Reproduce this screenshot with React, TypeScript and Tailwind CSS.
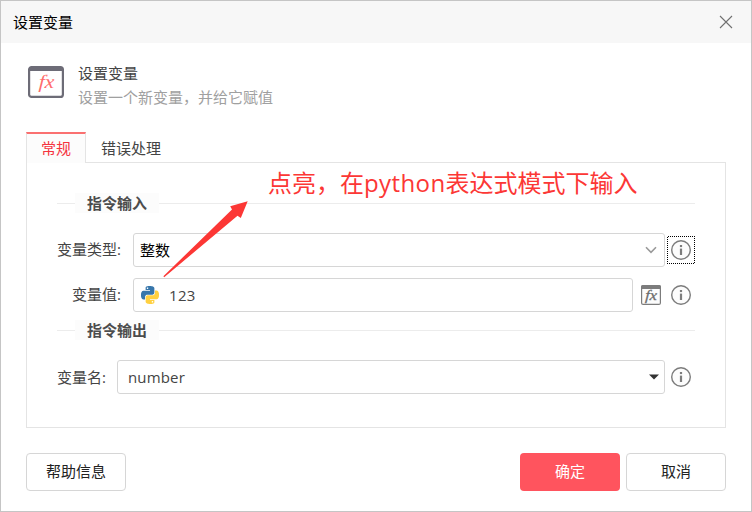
import React from "react";

const PYTHON_HALF =
  "M14.25.18l.9.2.73.26.59.3.45.32.34.34.25.34.16.33.1.3.04.26.02.2-.01.13V8.5l-.05.63-.13.55-.21.46-.26.38-.3.31-.33.25-.35.19-.35.14-.33.1-.3.07-.26.04-.21.02H8.77l-.69.05-.59.14-.5.22-.41.27-.33.32-.27.35-.2.36-.15.37-.1.35-.07.32-.04.27-.02.21v3.06H3.17l-.21-.03-.28-.07-.32-.12-.35-.18-.36-.26-.36-.36-.35-.46-.32-.59-.28-.73-.21-.88-.14-1.05-.05-1.23.06-1.22.16-1.04.24-.87.32-.71.36-.57.4-.44.42-.33.42-.24.4-.16.36-.1.32-.05.24-.01h.16l.06.01h8.16v-.83H6.18l-.01-2.75-.02-.37.05-.34.11-.31.17-.28.25-.26.31-.23.38-.2.44-.18.51-.15.58-.12.64-.1.71-.06.77-.04.84-.02 1.27.05zm-6.3 1.98l-.23.33-.08.41.08.41.23.34.33.22.41.09.41-.09.33-.22.23-.34.08-.41-.08-.41-.23-.33-.33-.22-.41-.09-.41.09z";

function PythonIcon() {
  return (
    <svg width="18" height="18" viewBox="0 0 24 24" className="shrink-0">
      <path d={PYTHON_HALF} fill="#3776ab" />
      <path d={PYTHON_HALF} fill="#ffd040" transform="rotate(180 12 12)" />
    </svg>
  );
}

function InfoIcon({ focused = false }: { focused?: boolean }) {
  return (
    <span className="relative flex h-5 w-5 shrink-0">
      <svg width="20" height="20" viewBox="0 0 20 20">
        <circle cx="10" cy="10" r="9.3" fill="#fcfcfc" stroke="#7c7c7c" strokeWidth="1.4" />
        <rect x="8.9" y="5" width="2.2" height="2.1" fill="#7c7c7c" />
        <rect x="8.9" y="8.6" width="2.2" height="6.4" fill="#7c7c7c" />
      </svg>
      {focused && (
        <svg className="absolute -left-[4px] -top-[4px]" width="28" height="28" viewBox="0 0 28 28">
          <path d="M1 .5h27M0 27.5h28M.5 1v27M27.5 0v28" fill="none" stroke="#000" strokeWidth="1" strokeDasharray="1 1" />
        </svg>
      )}
    </span>
  );
}

function FunctionIcon() {
  return (
    <svg width="36" height="32" viewBox="0 0 36 32" className="shrink-0">
      <rect x="1.1" y="1.1" width="33.8" height="29.8" rx="2.5" fill="#fff" stroke="#6d6c77" strokeWidth="2.2" />
      <path d="M1 5V3a2 2 0 0 1 2-2h30a2 2 0 0 1 2 2v2z" fill="#6d6c77" />
      <text x="0" y="0" transform="translate(18.2 22) scale(1.12 1) skewX(-3)" textAnchor="middle" fontFamily="Liberation Serif, serif" fontStyle="italic" fontSize="19" fill="#ff6b6b">fx</text>
    </svg>
  );
}

function FunctionButton() {
  return (
    <svg width="20" height="20" viewBox="0 0 20 20" className="shrink-0">
      <rect x="0.6" y="0.6" width="18.8" height="18.8" rx="1.5" fill="#fcfcfc" stroke="#7c7c7c" strokeWidth="1.2" />
      <path d="M0 4V2a2 2 0 0 1 2-2h16a2 2 0 0 1 2 2v2z" fill="#7c7c7c" />
      <text x="0" y="0" transform="translate(9.8 15) scale(1.12 1) skewX(-3)" textAnchor="middle" fontFamily="Liberation Serif, serif" fontStyle="italic" fontSize="14.5" fill="#6c6c6c" stroke="#6c6c6c" strokeWidth="0.3">fx</text>
    </svg>
  );
}

function GroupTitle({ children }: { children: React.ReactNode }) {
  return (
    <div className="flex h-5 items-center">
      <div className="h-px w-[18px] bg-[#ececec]" />
      <div className="h-5 w-[84px] bg-[#fcfcfc] pl-3 font-bold leading-5 text-[#4c4c4c]">{children}</div>
      <div className="h-px flex-1 bg-[#ececec]" />
    </div>
  );
}

const field = "flex h-[34px] items-center rounded-[3px] border border-[#d6d6d6] bg-white";
const button = "flex h-[38px] w-[100px] items-center justify-center rounded-[4px] pb-[2px]";

export default function App() {
  return (
    <div className="relative flex h-[512px] w-[752px] flex-col overflow-hidden border border-[#c5c5c5] bg-white font-['Open_Sans','Noto_Sans_CJK_SC',sans-serif] text-[15px] leading-5 text-[#444]">
      <header className="flex h-[42px] shrink-0 items-center justify-between bg-[#f7f7f7] pl-3 pr-[18px] text-black">
        <span>设置变量</span>
        <svg width="14" height="14" viewBox="0 0 14 14" stroke="#707070" strokeWidth="1.1">
          <path d="M1 1l12 12M13 1L1 13" />
        </svg>
      </header>

      <div className="flex h-[89px] shrink-0 pl-[27px] pt-[18px]">
        <div className="pt-[5px]"><FunctionIcon /></div>
        <div className="pl-[14px] leading-6">
          <div>设置变量</div>
          <div className="text-[#a0a0a0]">设置一个新变量，并给它赋值</div>
        </div>
      </div>

      <div className="mx-[25px] flex h-[31px] shrink-0">
        <div className="relative z-10 flex w-[60px] items-center justify-center border-x border-t-2 border-x-[#e4e4e4] border-t-[#fa7070] bg-[#fcfcfc] pb-[2px] text-[#f5333f]">常规</div>
        <div className="flex flex-1 items-center border-b border-[#e4e4e4] pl-[15px] pt-px">错误处理</div>
      </div>

      <main className="mx-[25px] h-[265px] shrink-0 border border-t-0 border-[#e4e4e4] px-[30px] pt-[30px]">
        <GroupTitle>指令输入</GroupTitle>
        <div className="mt-5 flex items-center">
          <span className="w-[65px] whitespace-nowrap pb-[2px]">变量类型:</span>
          <div className={field + " ml-[11px] w-[532px] justify-between pl-[6px] pr-[6px] text-black"}>
            <span>整数</span>
            <svg width="14" height="10" viewBox="0 0 14 10" fill="none" stroke="#999" strokeWidth="1.6">
              <path d="M2 2.3l5 5 5-5" />
            </svg>
          </div>
          <div className="ml-[6px]"><InfoIcon focused /></div>
        </div>
        <div className="mt-[11px] flex items-center">
          <span className="w-[65px] whitespace-nowrap pb-[2px] pl-[15px]">变量值:</span>
          <div className={field + " ml-[11px] w-[500px] pl-[7px]"}>
            <PythonIcon />
            <span className="ml-[10px] tracking-[0.3px]">123</span>
          </div>
          <div className="ml-2 flex gap-[10px]">
            <FunctionButton />
            <InfoIcon />
          </div>
        </div>
        <div className="mt-2"><GroupTitle>指令输出</GroupTitle></div>
        <div className="mt-5 flex items-center">
          <span className="w-[50px] whitespace-nowrap pb-px">变量名:</span>
          <div className={field + " ml-[10px] w-[548px] justify-between pl-[10px] pr-[5px]"}>
            <span className="tracking-[0.15px]">number</span>
            <svg width="10" height="6" viewBox="0 0 10 6"><path d="M0 .5h10L5 5.5z" fill="#333" /></svg>
          </div>
          <div className="ml-[6px]"><InfoIcon /></div>
        </div>
      </main>

      <footer className="mx-[25px] mt-[25px] flex gap-[6px]">
        <button className={button + " mr-auto border border-[#d6d6d6] bg-white text-[#222]"}>帮助信息</button>
        <button className={button + " bg-[#ff545e] text-white"}>确定</button>
        <button className={button + " border border-[#d6d6d6] bg-white text-[#222]"}>取消</button>
      </footer>

      <svg className="absolute left-[162px] top-[199px] z-20" width="86" height="79" viewBox="0 0 86 79">
        <path d="M0.4 76.2L69 9.5 67.2 6.3 84.7 1.2 77.8 18 74.5 15.8 1.2 77.2z" fill="#fc3735" />
      </svg>
      <div className="absolute left-[267px] top-[166px] z-20 whitespace-nowrap text-[24px] leading-[32px] text-[#fc3735]">
        点亮，在<span className="tracking-[0.4px]">python</span>表达式模式下输入
      </div>
    </div>
  );
}
